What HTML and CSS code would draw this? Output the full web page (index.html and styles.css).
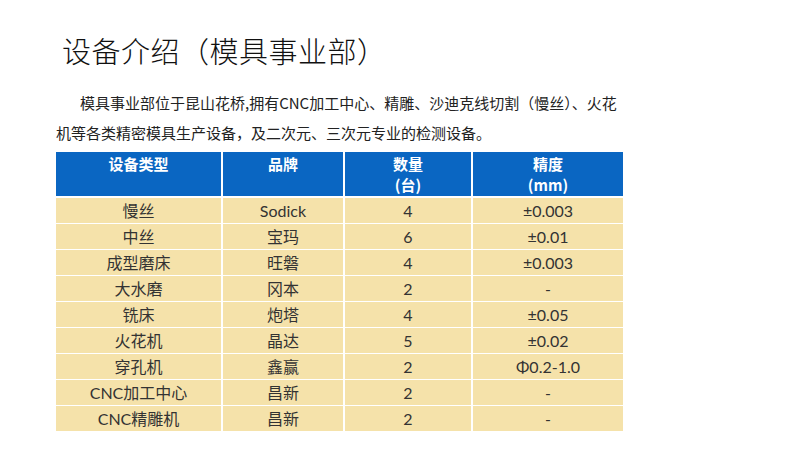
FILE: index.html
```html
<!DOCTYPE html>
<html lang="zh-CN">
<head>
<meta charset="utf-8">
<title>设备介绍（模具事业部）</title>
<link rel="stylesheet" href="styles.css">
</head>
<body>
<div class="slide">
  <h1 class="title">设备介绍（模具事业部）</h1>
  <p class="intro">模具事业部位于昆山花桥,拥有CNC加工中心、精雕、沙迪克线切割（慢丝）、火花机等各类精密模具生产设备，及二次元、三次元专业的检测设备。</p>
  <table class="equip">
    <colgroup>
      <col class="c1"><col class="c2"><col class="c3"><col class="c4">
    </colgroup>
    <thead>
      <tr><th>设备类型</th><th>品牌</th><th>数量<br>(台)</th><th>精度<br>(mm)</th></tr>
    </thead>
    <tbody>
      <tr><td>慢丝</td><td>Sodick</td><td>4</td><td>±0.003</td></tr>
      <tr><td>中丝</td><td>宝玛</td><td>6</td><td>±0.01</td></tr>
      <tr><td>成型磨床</td><td>旺磐</td><td>4</td><td>±0.003</td></tr>
      <tr><td>大水磨</td><td>冈本</td><td>2</td><td>-</td></tr>
      <tr><td>铣床</td><td>炮塔</td><td>4</td><td>±0.05</td></tr>
      <tr><td>火花机</td><td>晶达</td><td>5</td><td>±0.02</td></tr>
      <tr><td>穿孔机</td><td>鑫赢</td><td>2</td><td>Φ0.2-1.0</td></tr>
      <tr><td>CNC加工中心</td><td>昌新</td><td>2</td><td>-</td></tr>
      <tr><td>CNC精雕机</td><td>昌新</td><td>2</td><td>-</td></tr>
    </tbody>
  </table>
</div>
</body>
</html>
```
FILE: styles.css
```css
html, body {
  margin: 0;
  padding: 0;
  background: #ffffff;
}
.slide {
  width: 800px;
  height: 450px;
  box-sizing: border-box;
  padding: 33px 0 0 56px;
  font-family: "Noto Sans CJK SC", "Noto Sans", sans-serif;
  color: #222;
  overflow: hidden;
}
.title {
  margin: 0 0 0 6px;
  font-size: 29px;
  line-height: 35px;
  font-weight: 300;
  color: #111;
  letter-spacing: 0.5px;
}
.intro {
  margin: 20px 0 0 0;
  width: 570px;
  font-size: 15px;
  line-height: 30px;
  text-indent: 24px;
  color: #222;
}
.equip {
  margin-top: 4px;
  border-collapse: collapse;
  width: 567px;
  table-layout: fixed;
  font-size: 15px;
}
.c1 { width: 166px; }
.c2 { width: 122px; }
.c3 { width: 128px; }
.c4 { width: 151px; }
.equip th {
  background: #0A66C2;
  color: #ffffff;
  font-weight: 700;
  line-height: 21px;
  padding: 1px 0 1px;
  height: 42px;
  vertical-align: top;
  text-align: center;
  border-left: 2px solid #ffffff;
  border-bottom: 2px solid #ffffff;
}
.equip th:first-child,
.equip td:first-child {
  border-left: none;
}
.equip td {
  font-family: "Lato", "Noto Sans CJK SC", sans-serif;
  font-size: 16px;
  background: #F5E2AA;
  color: #333;
  height: 25px;
  padding: 0;
  line-height: 25px;
  text-align: center;
  vertical-align: middle;
  border-left: 2px solid #ffffff;
  border-bottom: 1px solid #ffffff;
}
.equip tbody tr:last-child td {
  border-bottom: none;
}
```
